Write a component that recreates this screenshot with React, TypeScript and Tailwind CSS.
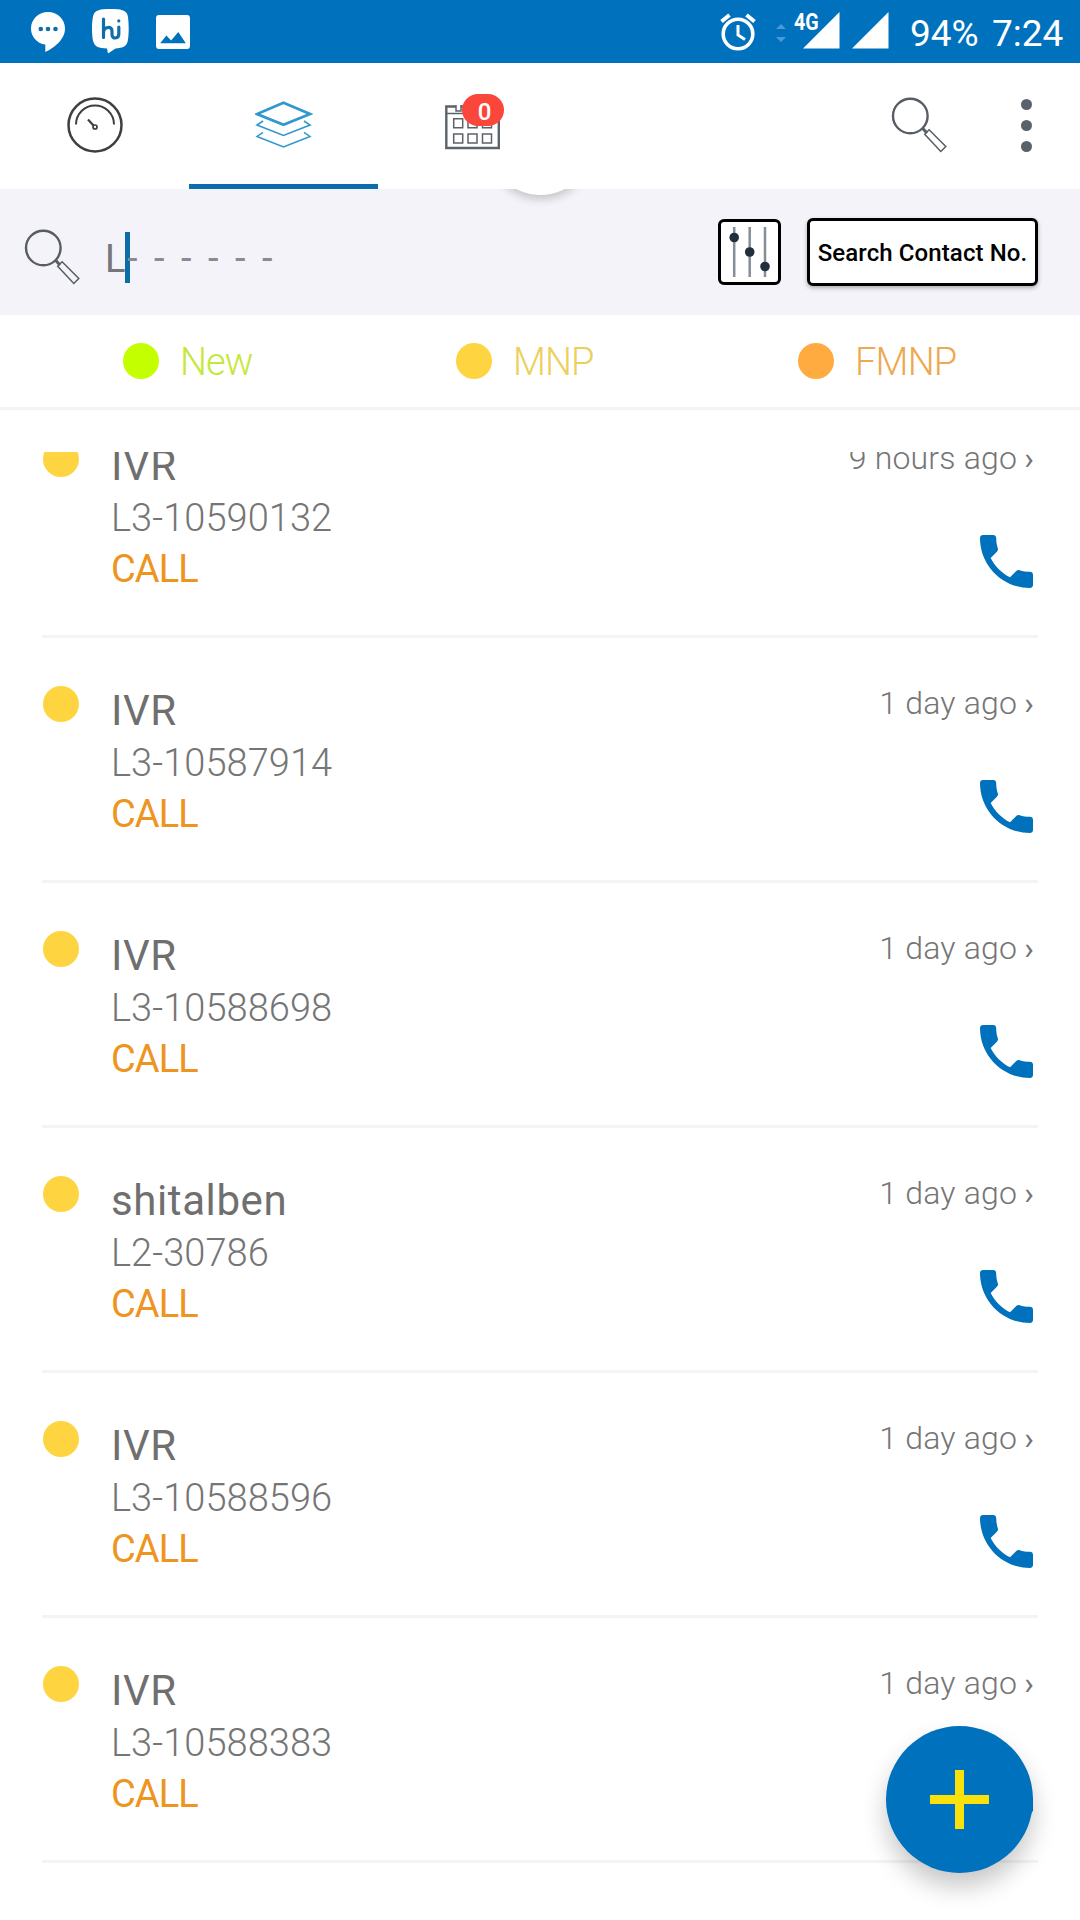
type Lead = { name: string; id: string; time: string };

const LEADS: Lead[] = [
  { name: 'IVR', id: 'L3-10590132', time: '9 hours ago' },
  { name: 'IVR', id: 'L3-10587914', time: '1 day ago' },
  { name: 'IVR', id: 'L3-10588698', time: '1 day ago' },
  { name: 'shitalben', id: 'L2-30786', time: '1 day ago' },
  { name: 'IVR', id: 'L3-10588596', time: '1 day ago' },
  { name: 'IVR', id: 'L3-10588383', time: '1 day ago' },
];

const SearchIcon = ({ className = '' }: { className?: string }) => (
  <svg className={className} width="56" height="56" viewBox="0 0 56 56" fill="none" stroke="#585d64">
    <circle cx="19.300" cy="19" r="17.300" strokeWidth="2.400" />
    <path d="M31.500 31.300l4.500 4.700" strokeWidth="3" />
    <path d="M33.700 37.200l4.400-4.400L54.800 49.500l-5 5z" strokeWidth="1.500" />
  </svg>
);

const StatusBar = () => (
  <div className="h-[63px] bg-[#0071bc] flex items-start text-white">
    <svg className="ml-[31px] mt-3" width="34" height="40" viewBox="0 0 34 40">
      <path fill="#fff" d="M17 0C7.600 0 0 7.300 0 16.400c0 8 5.700 14.800 14.300 16.200V40c8-4 19.700-12 19.700-23.600C34 7.300 26.400 0 17 0z" />
      <g fill="#0f6ea9">
        <circle cx="9.800" cy="17" r="2.300" />
        <circle cx="17" cy="17" r="2.300" />
        <circle cx="24.500" cy="17" r="2.300" />
      </g>
    </svg>
    <svg className="ml-[27px] mt-[9px]" width="37" height="45" viewBox="0 0 37 45">
      <path fill="#fff" d="M18.500 0C29 0 34 1 35.500 6c1.600 5 1.600 22 0 27-1.300 4.500-5 6-12 6.400L16 44.500 15 39.400C6.500 39 3 38 1.500 33c-2-5-2-22 0-27C3 1 8 0 18.500 0z" />
      <g fill="none" stroke="#0f6ea9" strokeWidth="3.200" strokeLinecap="round" strokeLinejoin="round">
        <path d="M11.500 10v18.500M11.500 22.500c.8-4.500 8.500-6 8.500-.5v3.500c0 5 6.800 4.500 6.800-.5v-7" />
        <path d="M26.800 11.800v.2" />
      </g>
    </svg>
    <svg className="ml-[27px] mt-[15px]" width="34" height="34" viewBox="3 3 18 18" fill="#fff">
      <path d="M21 19V5c0-1.500-.5-2-1.600-2H4.600C3.500 3 3 3.500 3 5v14c0 1.500.5 2 1.600 2h14.800c1.100 0 1.600-.5 1.600-2zM8.500 13.800l2.500 2.700 3.800-4.500 4 6H5.200l3.300-4.200z" />
    </svg>
    <svg className="ml-[530px] mt-[13px]" width="36" height="38" viewBox="0 0 36 38" fill="none" stroke="#fff">
      <circle cx="18" cy="21" r="14.800" strokeWidth="3.600" />
      <path d="M18 12v10l7 4.500" strokeWidth="3" />
      <path d="M1.500 8.500L9.500 2M34.500 8.500L26.500 2" strokeWidth="4" />
    </svg>
    <svg className="ml-5 mt-6" width="10" height="18" viewBox="0 0 10 18" fill="#4d9ad3">
      <path d="M5 0l5 5H0zM5 18l5-5H0z" />
    </svg>
    <span className="ml-[8px] mt-[8px] w-[25px] text-[24px] leading-[28px] font-bold whitespace-nowrap">
      <span className="inline-block origin-left scale-x-[.82]">4G</span>
    </span>
    <svg className="-ml-4 mt-3" width="86" height="37" viewBox="0 0 86 37" fill="#fff">
      <path d="M36.500 0v36.500H0zM85.500 0v36.500H49z" />
    </svg>
    <span className="ml-[21px] mt-[12px] w-[82px] text-[37px] leading-[44px] whitespace-nowrap">94%</span>
    <span className="mt-[12px] text-[37px] leading-[44px]">7:24</span>
  </div>
);

const NavBar = () => (
  <div className="h-[126px] bg-white flex">
    <div className="w-[189px] pb-[2px] flex items-center justify-center">
      <svg width="56" height="56" viewBox="0 0 56 56" fill="none" stroke="#403e3e">
        <circle cx="28" cy="28" r="26.500" strokeWidth="2.500" />
        <path d="M9 27.500a19 19 0 0 1 38 0" strokeWidth="2" />
        <path d="M21 22.500l5.500 6" strokeWidth="2.200" />
        <circle cx="28" cy="30" r="2" strokeWidth="1.700" />
      </svg>
    </div>
    <div className="w-[189px] flex items-center justify-center border-b-[5px] border-[#0c6dac]">
      <svg className="mt-[3px]" width="58" height="48" viewBox="0 0 58 48" fill="none" stroke="#2f98cf">
        <path d="M28.500 1.800L55 13 28.500 23.700 2 13z" strokeWidth="2.700" />
        <path d="M8 20L2 24l26.500 10.500L55 24l-6-4" strokeWidth="1.600" />
        <path d="M8 31.300L2 35.500 28.500 46 55 35.500l-6-4.200" strokeWidth="1.500" />
      </svg>
    </div>
    <div className="w-[189px] pl-[67px] pt-[42px]">
      <div className="relative">
        <svg width="56" height="46" viewBox="0 0 56 46" fill="none" stroke="#5c6368">
          <path d="M1.300 1.500h52.500v41.500H1.300z" strokeWidth="2.400" />
          <path d="M1 8.500h53" strokeWidth="1.300" />
          <g strokeWidth="1.500">
            <path fill="#fff" d="M11 -1h5v7h-5z" />
            <path d="M8.700 13.700h9v9h-9zM23 13.700h9v9h-9zM37.500 13.700h9v9h-9zM8.700 29h9v9h-9zM23 29h9v9h-9zM37.500 29h9v9h-9z" />
          </g>
        </svg>
        <span className="absolute left-[17px] top-[-11px] w-[42px] h-8 pl-[3px] rounded-full bg-[#fb463c] text-white text-[24px] leading-[36px] font-medium text-center">0</span>
      </div>
    </div>
    <SearchIcon className="ml-[324px] mt-[34px]" />
    <div className="ml-[74px] mt-9 flex flex-col gap-[10px]">
      <i className="size-[11px] rounded-full bg-[#59626b]" />
      <i className="size-[11px] rounded-full bg-[#59626b]" />
      <i className="size-[11px] rounded-full bg-[#59626b]" />
    </div>
  </div>
);

const SearchBar = () => (
  <div className="relative overflow-hidden h-[126px] bg-[#f3f3f9] flex items-start">
    {/* pull-to-refresh spinner peeking out below the tabs */}
    <div className="absolute left-[488px] top-[-99px] size-[105px] rounded-full bg-white shadow-[0_4px_10px_rgba(0,0,0,0.2)]" />
    <SearchIcon className="ml-6 mt-10" />
    <div className="ml-[25px] mt-[43px] w-[613px] h-[51px] flex items-start text-[38px] leading-[51px] text-[#75757a]">
      <span className="w-[20px] pt-[2px]">L</span>
      <span className="w-[5px] h-[51px] bg-[#0c6ca5]" />
      <span className="-ml-[3px] pt-px flex text-[#8a8a8f]">
        {[0, 1, 2, 3, 4, 5].map((i) => (
          <span key={i} className="w-[27px]">-</span>
        ))}
      </span>
    </div>
    <div className="mt-[30px] w-[63px] h-[66px] border-[3px] border-black rounded-md bg-white flex items-center justify-center">
      <svg width="42" height="50" viewBox="0 0 42 50" stroke="#858f96" strokeWidth="2.500">
        <path d="M5.200 0v50M20.700 0v50M36 0v50" />
        <g fill="#22303d" stroke="none">
          <circle cx="5.200" cy="10.500" r="4.800" />
          <circle cx="20.700" cy="25" r="4.800" />
          <circle cx="36" cy="39.500" r="4.800" />
        </g>
      </svg>
    </div>
    <button className="ml-[26px] mt-[29px] w-[231px] h-[68px] pt-[2px] border-[3px] border-black rounded-md bg-white text-black text-[24px] tracking-[0.1px] font-medium whitespace-nowrap shadow-[0_2px_4px_rgba(0,0,0,0.3)]">
      Search Contact No.
    </button>
  </div>
);

const Legend = () => (
  <div className="h-[95px] border-b-[3px] border-[#f4f4f4] flex items-center text-[38px] leading-[44px] font-light">
    <div className="ml-[123px] w-[333px] flex items-center gap-[21px] text-[#c3e838]">
      <i className="mb-px size-9 rounded-full bg-[#c4ff00]" />
      <span className="pt-px tracking-[-0.9px]">New</span>
    </div>
    <div className="w-[342px] flex items-center gap-[21px] text-[#ecd05c]">
      <i className="mb-px size-9 rounded-full bg-[#fed541]" />
      <span className="pt-px tracking-[-1px]">MNP</span>
    </div>
    <div className="flex items-center gap-[21px] text-[#eda94f]">
      <i className="mb-px size-9 rounded-full bg-[#ffab40]" />
      <span className="pt-px tracking-[-0.8px]">FMNP</span>
    </div>
  </div>
);

const LeadRow = ({ lead }: { lead: Lead }) => (
  <div className="mx-[42px] h-[245px] shrink-0 border-b-[3px] border-[#f4f4f4] flex text-[#757575]">
    <i className="ml-px mt-12 size-9 rounded-full bg-[#fed541]" />
    <div className="ml-8 pt-[47px] flex flex-col text-[38px] leading-[51px]">
      <span className="mb-px text-[42px] leading-[52px] tracking-[0.6px] text-[#6f6f6f]">{lead.name}</span>
      <span className="font-light tracking-[0.05px]">{lead.id}</span>
      <span className="text-[#ee9421] tracking-[-0.9px]">CALL</span>
    </div>
    <div className="ml-auto pr-[5px] pt-[43px] flex flex-col items-end">
      <span className="-mr-px text-[32px] leading-[44px] font-light tracking-[0.2px]">
        {lead.time} <span className="-ml-px font-normal">›</span>
      </span>
      <svg className="mt-[55px]" width="53" height="53" viewBox="3 3 18 18" fill="#0071bc">
        <path d="M6.620 10.790c1.440 2.830 3.760 5.140 6.590 6.590l2.200-2.200c.27-.27.67-.36 1.020-.24 1.120.37 2.330.57 3.570.57.55 0 1 .45 1 1V20c0 .55-.45 1-1 1-9.390 0-17-7.610-17-17 0-.55.45-1 1-1h3.500c.55 0 1 .45 1 1 0 1.250.2 2.450.57 3.570.11.35.03.74-.25 1.020l-2.200 2.200z" />
      </svg>
    </div>
  </div>
);

export default function App() {
  return (
    <div className="relative w-[1080px] h-[1920px] overflow-hidden bg-white font-['Roboto',sans-serif] flex flex-col">
      <StatusBar />
      <NavBar />
      <SearchBar />
      <Legend />
      {/* the list is scrolled a little, so its first row is cut by the top edge */}
      <div className="mt-[42px] flex-1 overflow-hidden">
        <div className="-mt-[59px] flex flex-col">
          {LEADS.map((lead) => (
            <LeadRow key={lead.id} lead={lead} />
          ))}
        </div>
      </div>
      <button className="absolute left-[886px] top-[1726px] size-[147px] rounded-full bg-[#0071bc] flex items-center justify-center shadow-[0_14px_24px_rgba(0,0,0,0.22)]">
        <svg width="59" height="59" viewBox="0 0 59 59" fill="#fbe10b">
          <path d="M25 0h9v25h25v9H34v25h-9V34H0v-9h25z" />
        </svg>
      </button>
    </div>
  );
}
